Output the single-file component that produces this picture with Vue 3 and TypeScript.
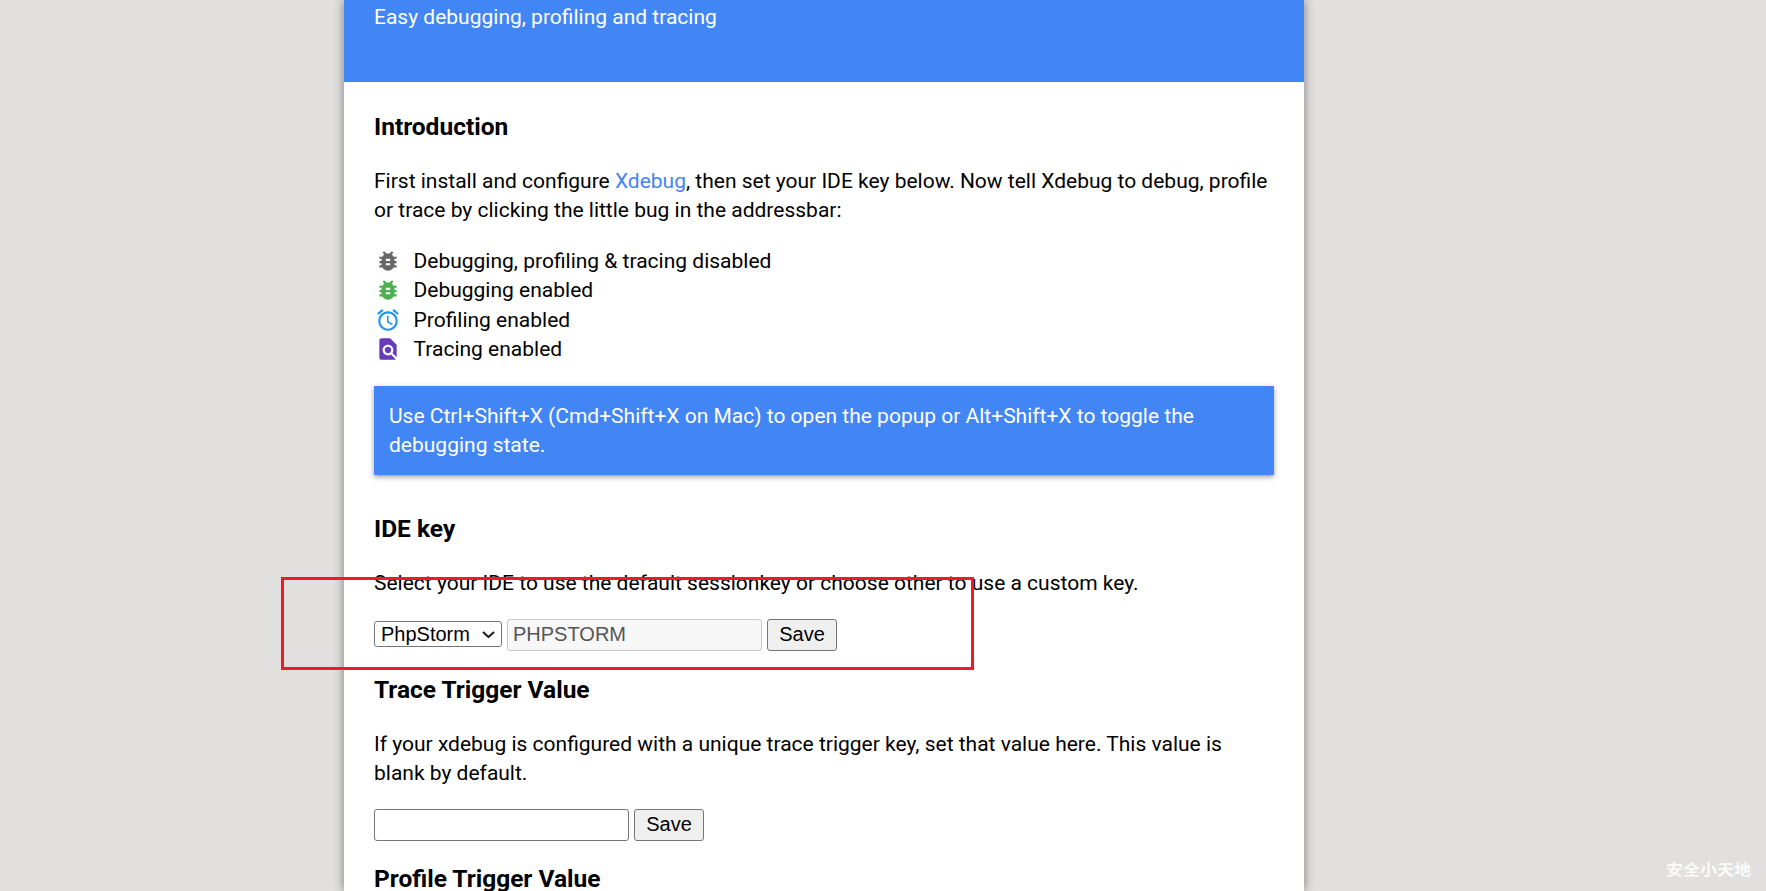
<script setup lang="ts">
interface Row { label: string; color: string; d: string }
const bugIcon = "M20 8h-2.81c-.45-.78-1.07-1.45-1.82-1.96L17 4.41 15.59 3l-2.17 2.17C12.96 5.06 12.49 5 12 5c-.49 0-.96.06-1.41.17L8.41 3 7 4.41l1.62 1.63C7.88 6.55 7.26 7.22 6.81 8H4v2h2.09c-.05.33-.09.66-.09 1v1H4v2h2v1c0 .34.04.67.09 1H4v2h2.81c1.04 1.79 2.97 3 5.19 3s4.15-1.21 5.19-3H20v-2h-2.09c.05-.33.09-.66.09-1v-1h2v-2h-2v-1c0-.34-.04-.67-.09-1H20V8zm-6 8h-4v-2h4v2zm0-4h-4v-2h4v2z";
const rows: Row[] = [
  { label: "Debugging, profiling & tracing disabled", color: "#666666", d: bugIcon },
  { label: "Debugging enabled", color: "#4caf50", d: bugIcon },
  { label: "Profiling enabled", color: "#2196f3", d: "M22 5.72l-4.6-3.86-1.29 1.53 4.6 3.86L22 5.72zM7.88 3.39L6.6 1.86 2 5.71l1.29 1.53 4.59-3.85zM12.5 8H11v6l4.75 2.85.75-1.23-4-2.37V8zM12 4c-4.97 0-9 4.03-9 9s4.03 9 9 9 9-4.03 9-9-4.03-9-9-9zm0 16c-3.87 0-7-3.13-7-7s3.13-7 7-7 7 3.13 7 7-3.13 7-7 7z" },
  { label: "Tracing enabled", color: "#673ab7", d: "M20 19.59V8l-6-6H6c-1.1 0-1.99.9-1.99 2L4 20c0 1.1.89 2 1.99 2H18c.45 0 .85-.15 1.19-.4l-4.43-4.43c-.8.52-1.74.83-2.76.83-2.76 0-5-2.24-5-5s2.24-5 5-5 5 2.24 5 5c0 1.02-.31 1.96-.83 2.75L20 19.59zM9 13c0 1.66 1.34 3 3 3s3-1.34 3-3-1.34-3-3-3-3 1.34-3 3z" },
];
</script>

<template>
  <div class="page">
    <main class="card">
      <header class="banner">Easy debugging, profiling and tracing</header>
      <section class="content">
        <h2 class="first">Introduction</h2>
        <p>First install and configure <a href="#">Xdebug</a>, then set your IDE key below. Now tell Xdebug to debug, profile or trace by clicking the little bug in the addressbar:</p>
        <ul>
          <li v-for="r in rows" :key="r.label">
            <svg viewBox="0 0 24 24" width="26" height="26" :fill="r.color"><path :d="r.d" /></svg>
            <span>{{ r.label }}</span>
          </li>
        </ul>
        <div class="note">Use Ctrl+Shift+X (Cmd+Shift+X on Mac) to open the popup or Alt+Shift+X to toggle the debugging state.</div>
        <h2 class="ide">IDE key</h2>
        <p>Select your IDE to use the default sessionkey or choose other to use a custom key.</p>
        <div class="controls">
          <div class="select-wrap">
            <select class="ide-select"><option>PhpStorm</option></select>
            <svg class="chevron" viewBox="0 0 13 7" width="13" height="7" fill="none" stroke="#1a1a1a" stroke-width="2"><path d="M1 1l5.5 5L12 1" /></svg>
          </div>
          <input class="key disabled" type="text" value="PHPSTORM" disabled />
          <button type="button">Save</button>
        </div>
        <h2 class="trace">Trace Trigger Value</h2>
        <p>If your xdebug is configured with a unique trace trigger key, set that value here. This value is blank by default.</p>
        <div class="controls second">
          <input class="key" type="text" />
          <button type="button">Save</button>
        </div>
        <h2 class="profile">Profile Trigger Value</h2>
      </section>
    </main>
    <div class="annotation"></div>
    <div class="watermark">安全小天地</div>
  </div>
</template>

<style>
html, body { margin: 0; overflow: hidden; background: #e1e0de; }
</style>

<style scoped>
.page {
  position: relative;
  height: 891px;
  overflow: hidden;
  background: #e1e0de;
  font-family: Roboto, "Noto Sans", sans-serif;
  font-size: 21px;
  line-height: 29.3px;
  color: #000;
}
.card {
  width: 960px;
  height: 891px;
  margin-left: 344px;
  background: #fff;
  box-shadow: 0 0 10px rgba(0, 0, 0, 0.45);
}
.banner {
  height: 82px;
  box-sizing: border-box;
  padding: 3px 30px 0;
  background: #4285f4;
  color: #fff;
}
.content { padding: 0 30px; }
h2 {
  margin: 0;
  font-size: 24.5px;
  line-height: 30px;
  font-weight: 700;
}
h2.first { margin-top: 30px; }
h2.ide { margin-top: 39px; }
h2.trace { margin-top: 24px; }
h2.profile { margin-top: 23px; }
p { margin: 25px 0 0; }
a { color: #4285f4; text-decoration: none; }
ul { list-style: none; margin: 21.3px 0 0; padding: 0; }
li { display: flex; align-items: center; height: 29.4px; }
li svg { flex: none; margin: 0 13px 1px 0.5px; }
.note {
  margin-top: 21.7px;
  padding: 16px 15px 14px;
  background: #4285f4;
  color: #fff;
  box-shadow: 0 2px 5px rgba(0, 0, 0, 0.4);
}
.controls {
  display: flex;
  align-items: center;
  gap: 5px;
  margin-top: 21px;
  height: 32px;
}
.controls.second { margin-top: 20px; }
.controls.second button { padding-bottom: 1px; }
.select-wrap {
  position: relative;
  width: 128px;
  height: 26px;
  margin-top: -2px;
}
.chevron {
  position: absolute;
  right: 7px;
  top: 10px;
  pointer-events: none;
}
.ide-select {
  display: block;
  width: 128px;
  height: 26px;
  box-sizing: border-box;
  appearance: none;
  font-family: "Liberation Sans", Arial, sans-serif;
  font-size: 20px;
  background: #fff;
  color: #000;
  border: 1px solid #767676;
  border-radius: 3px;
  padding: 0 0 0 6px;
}
.key {
  width: 255px;
  height: 32px;
  box-sizing: border-box;
  font-family: "Liberation Sans", Arial, sans-serif;
  font-size: 20px;
  padding: 0 5px 2px;
  border: 1px solid #767676;
  border-radius: 3px;
  background: #fff;
}
.key.disabled {
  background: #f7f7f7;
  border-color: #c9c9c9;
  color: #555;
}
button {
  width: 70px;
  height: 32px;
  box-sizing: border-box;
  padding: 0 0 2px;
  font-family: "Liberation Sans", Arial, sans-serif;
  font-size: 20px;
  background: #efefef;
  color: #000;
  border: 1px solid #767676;
  border-radius: 3px;
}
.annotation {
  position: absolute;
  left: 281px;
  top: 577px;
  width: 693px;
  height: 93px;
  box-sizing: border-box;
  border: 3px solid #ed1c24;
}
.watermark {
  position: absolute;
  right: 15px;
  top: 857px;
  font-family: "Noto Sans CJK SC", sans-serif;
  font-size: 17px;
  line-height: 24px;
  font-weight: 700;
  color: #fff;
  opacity: 0.9;
  transform: scaleY(0.85);
}
</style>
